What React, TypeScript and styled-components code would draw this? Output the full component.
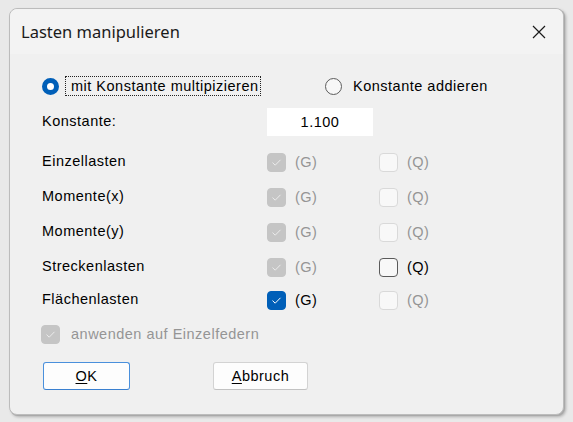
import React from "react";
import styled, { createGlobalStyle } from "styled-components";

const GlobalStyle = createGlobalStyle`
  html, body {
    margin: 0;
    padding: 0;
    background: #e9e9e9;
  }
  body {
    font-family: "Liberation Sans", Arial, sans-serif;
  }
`;

const Screen = styled.div`
  width: 573px;
  height: 422px;
  padding: 8px 0 0 9px;
  box-sizing: border-box;
`;

const Window = styled.div`
  width: 555px;
  height: 407px;
  box-sizing: border-box;
  background: #f0f0f0;
  border: 1px solid #bcbcbc;
  border-radius: 8px;
  box-shadow: 1px 1px 0 #a9a9a9, 2px 2px 3px rgba(0, 0, 0, 0.25);
  display: flex;
  flex-direction: column;
`;

const TitleBar = styled.div`
  height: 45px;
  display: flex;
  align-items: center;
  justify-content: space-between;
  padding: 0 17px 0 11px;
  background: #f3f3f3;
  border-radius: 8px 8px 0 0;
`;

const Title = styled.span`
  font-family: "Noto Sans", "Open Sans", sans-serif;
  font-size: 16.5px;
  color: #1a1a1a;
  margin-top: -1px;
`;

const Content = styled.div`
  display: flex;
  flex-direction: column;
  padding: 18px 0 0 32px;
  font-size: 14.5px;
  letter-spacing: 0.5px;
  color: #000;
`;

const Row = styled.div<{ $h: number }>`
  height: ${(p) => p.$h}px;
  display: grid;
  grid-template-columns: 225px 112px 1fr;
  align-items: center;
`;

const RadioRow = styled.div`
  height: 28px;
  display: flex;
  align-items: center;
  margin-left: 0;
`;

const RadioOption = styled.label<{ $w?: number; $gap: number }>`
  display: flex;
  align-items: center;
  gap: ${(p) => p.$gap}px;
  width: ${(p) => (p.$w ? `${p.$w}px` : "auto")};
`;

const RadioDot = styled.span<{ $on?: boolean }>`
  width: 17px;
  height: 17px;
  box-sizing: border-box;
  border-radius: 50%;
  flex: none;
  background: ${(p) => (p.$on ? "#fff" : "#f7f7f7")};
  border: ${(p) => (p.$on ? "5px solid #005fb8" : "1px solid #5c5c5c")};
`;

const FocusLabel = styled.span`
  border: 1px dotted #222;
  padding: 0 1px 1px 5px;
  height: 20px;
  box-sizing: border-box;
  display: flex;
  align-items: center;
  white-space: nowrap;
`;

const PlainLabel = styled.span`
  white-space: nowrap;
  margin-top: -1px;
`;

const LoadLabel = styled.span`
  margin-top: -4px;
`;

const NumberBox = styled.div`
  width: 106px;
  height: 28px;
  background: #fff;
  display: flex;
  align-items: center;
  justify-content: center;
  margin-top: -1px;
`;

const CheckItem = styled.label`
  display: flex;
  align-items: center;
  gap: 9px;
`;

type BoxState = "disabledChecked" | "disabledEmpty" | "empty" | "checked";

const Box = styled.span<{ $state: BoxState }>`
  width: 19px;
  height: 19px;
  box-sizing: border-box;
  border-radius: 4px;
  flex: none;
  display: flex;
  align-items: center;
  justify-content: center;
  background: ${(p) =>
    p.$state === "checked"
      ? "#005fb8"
      : p.$state === "disabledChecked"
      ? "#c5c5c5"
      : "#f8f8f8"};
  border: 1px solid
    ${(p) =>
      p.$state === "checked"
        ? "#005fb8"
        : p.$state === "disabledChecked"
        ? "#c5c5c5"
        : p.$state === "empty"
        ? "#5a5a5a"
        : "#d9d9d9"};
`;

const CheckText = styled.span<{ $dim?: boolean }>`
  color: ${(p) => (p.$dim ? "#959595" : "#000")};
  margin-top: -1px;
`;

const ApplyRow = styled.div`
  height: 36px;
  display: flex;
  align-items: center;
  gap: 11px;
  margin-left: -1px;
`;

const ButtonRow = styled.div`
  display: flex;
  gap: 83px;
  margin-top: 10px;
  margin-left: 1px;
`;

const Button = styled.button<{ $default?: boolean; $w: number }>`
  width: ${(p) => p.$w}px;
  height: 28px;
  box-sizing: border-box;
  font-family: "Liberation Sans", Arial, sans-serif;
  font-size: 14.5px;
  letter-spacing: 0.5px;
  color: #000;
  background: #fdfdfd;
  border-radius: 3px;
  border: 1px solid ${(p) => (p.$default ? "#4a90dc" : "#d3d3d3")};
  border-bottom-color: ${(p) => (p.$default ? "#3a80d0" : "#c2c2c2")};
  padding: 0 0 1px;
  display: flex;
  align-items: center;
  justify-content: center;
`;

const Mnemonic = styled.span`
  text-decoration: underline;
  text-underline-offset: 2px;
`;

function Check({ state }: { state: BoxState }) {
  if (state === "empty" || state === "disabledEmpty") return <Box $state={state} />;
  const color = state === "checked" ? "#ffffff" : "#ececec";
  return (
    <Box $state={state}>
      <svg width="11" height="9" viewBox="0 0 11 9">
        <path d="M1.5 4.6 L4.2 7.2 L9.5 1.8" fill="none" stroke={color} strokeWidth="1" />
      </svg>
    </Box>
  );
}

type Load = { name: string; g: BoxState; q: BoxState; h: number };

const loads: Load[] = [
  { name: "Einzellasten", g: "disabledChecked", q: "disabledEmpty", h: 35 },
  { name: "Momente(x)", g: "disabledChecked", q: "disabledEmpty", h: 35 },
  { name: "Momente(y)", g: "disabledChecked", q: "disabledEmpty", h: 35 },
  { name: "Streckenlasten", g: "disabledChecked", q: "empty", h: 35 },
  { name: "Flächenlasten", g: "checked", q: "disabledEmpty", h: 31 },
];

const dim = (s: BoxState) => s === "disabledChecked" || s === "disabledEmpty";

export default function App() {
  return (
    <>
      <GlobalStyle />
      <Screen>
        <Window>
          <TitleBar>
            <Title>Lasten manipulieren</Title>
            <svg width="14" height="14" viewBox="0 0 14 14">
              <path d="M1 1 L13 13 M13 1 L1 13" stroke="#1a1a1a" strokeWidth="1.2" />
            </svg>
          </TitleBar>
          <Content>
            <RadioRow>
              <RadioOption $w={283} $gap={6}>
                <RadioDot $on />
                <FocusLabel>mit Konstante multipizieren</FocusLabel>
              </RadioOption>
              <RadioOption $gap={11}>
                <RadioDot />
                <PlainLabel>Konstante addieren</PlainLabel>
              </RadioOption>
            </RadioRow>
            <Row $h={45}>
              <LoadLabel>Konstante:</LoadLabel>
              <NumberBox>1.100</NumberBox>
            </Row>
            {loads.map((l) => (
              <Row key={l.name} $h={l.h}>
                <LoadLabel>{l.name}</LoadLabel>
                <CheckItem>
                  <Check state={l.g} />
                  <CheckText $dim={dim(l.g)}>(G)</CheckText>
                </CheckItem>
                <CheckItem>
                  <Check state={l.q} />
                  <CheckText $dim={dim(l.q)}>(Q)</CheckText>
                </CheckItem>
              </Row>
            ))}
            <ApplyRow>
              <Check state="disabledChecked" />
              <CheckText $dim>anwenden auf Einzelfedern</CheckText>
            </ApplyRow>
            <ButtonRow>
              <Button $default $w={87}>
                <Mnemonic>O</Mnemonic>K
              </Button>
              <Button $w={95}>
                <Mnemonic>A</Mnemonic>bbruch
              </Button>
            </ButtonRow>
          </Content>
        </Window>
      </Screen>
    </>
  );
}
